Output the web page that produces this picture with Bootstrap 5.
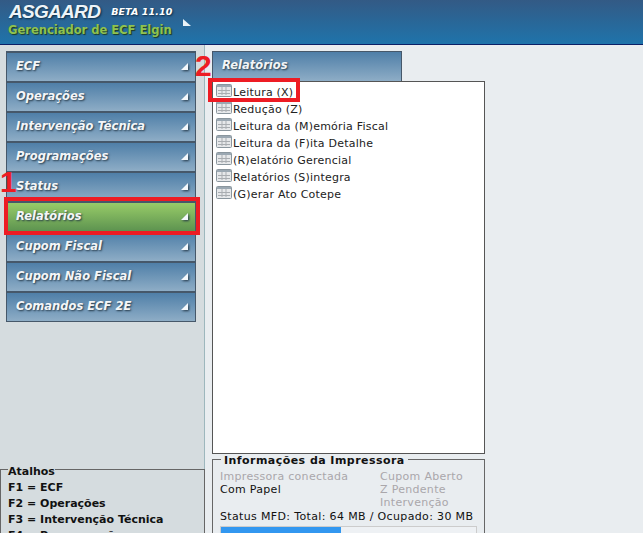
<!DOCTYPE html>
<html lang="pt"><head><meta charset="utf-8"><title>Asgaard</title>
<link href="https://cdn.jsdelivr.net/npm/bootstrap@5.3.0/dist/css/bootstrap.min.css" rel="stylesheet">
<style>
html,body{height:533px;overflow:hidden}
body{font-family:"DejaVu Sans",Verdana,sans-serif;font-size:11px;line-height:13px;background:#e9edf0;color:#111;position:relative}
.topbar{height:45px;background:linear-gradient(#335a85,#1f74ab);border-bottom:1px solid #0b1f66;padding:0 8px;position:relative}
.brand-a{font-family:"Liberation Sans",sans-serif;font-size:19px;line-height:23px;font-weight:700;font-style:italic;color:#eef4f8;text-shadow:1px 1px 2px #0b2c44;padding-left:1px}
.brand-a>span:first-child{letter-spacing:-.7px}
.brand-b{font-family:"DejaVu Sans",sans-serif;font-size:9.5px;font-weight:700;font-style:italic;color:#fff;margin-left:11px;letter-spacing:.1px}
.brand-c{font-size:11.5px;line-height:14px;font-weight:700;color:#8fc24f;text-shadow:1px 1px 1px #1c3a20}
.corner{position:absolute;left:183px;top:19px}
.shell{height:488px}
.leftcol{width:205px;background:#d5dcdf;border-right:1px solid #9db7bd;padding:6px 0 0 0}
.menu{margin:0 8px 0 6px;border:1px solid #46586a;border-top:0}
.menu-row{height:30px;padding:0 7px 2px 9px;background:linear-gradient(#4f7fa8,#8eadc6);border-top:2px solid #46586a;color:#f4f6f8;font-weight:700;font-style:italic;font-size:11.5px;text-shadow:1px 1px 2px #233746}
.menu-row.on{background:linear-gradient(#98cc68,#5d9350)}
.tri{width:0;height:0;border-style:solid;border-width:0 0 7px 7px;border-color:transparent transparent #f4f8fb transparent;filter:drop-shadow(1px 1px 1px #233746)}
.shortcuts{position:absolute;left:0;top:469px;width:205px;height:80px;border:1px solid #666;padding:0 7px;margin:0;background:#d5dcdf}
.shortcuts div{font-weight:700;line-height:16px;font-size:11px;color:#111}
.sc-legend{position:absolute;left:7px;top:-5px;line-height:13px!important;background:#d5dcdf}
.sc-list{padding-top:10px}
.rightcol{padding:6px 0 0 7px;min-width:0}
.tab-h{width:190px;height:30px;background:linear-gradient(#4f7fa8,#8eadc6);border:1px solid #46586a;border-bottom:0;color:#f2f5f7;font-weight:700;font-style:italic;font-size:11.5px;padding:0 0 2px 9px;text-shadow:1px 1px 2px #233746}
.listbox{width:273px;height:373px;background:#fff;border:1px solid #555;padding:2px 0 0 3px}
.entry{height:17px;gap:1px;font-size:11px;line-height:18px;letter-spacing:.22px;color:#222}
.info{position:relative;width:273px;height:90px;margin-top:5px;border:1px solid #666;padding:10px 7px 0 7px}
.info-legend{position:absolute;left:8px;top:-6px;background:#e9edf0;font-weight:700;padding:0 3px;line-height:13px;font-size:11px;letter-spacing:.45px}
.info-grid{line-height:13px;letter-spacing:.3px}
.info-left{width:160px}
.dim{color:#aaa7ab}
.status-line{margin-top:1px;line-height:13px;letter-spacing:.35px}
.bar-track{height:12px;border:1px solid #ccc;background:#eef1f4;margin-top:3px}
.bar-fill{height:100%;background:#3297f0}
.mark-box{position:absolute;border:4px solid #ed1c24;pointer-events:none}
.mark-num{position:absolute;color:#ed1c24;font-family:"Liberation Sans",sans-serif;font-weight:700;font-size:30px;line-height:30px}
</style></head><body>
<svg width="0" height="0" class="position-absolute"><defs><symbol id="sheet" viewBox="0 0 16 14"><rect x=".5" y=".5" width="15" height="12" rx="1" fill="#e6e8ea" stroke="#8a969e"/><rect x="1" y="1" width="14" height="2" fill="#9ba8b2"/><path d="M2 6.5H14M2 9.5H14M6 3V11M10 3V11" stroke="#a9adb1" fill="none"/></symbol></defs></svg>
<header class="topbar">
<div class="brand-a d-flex align-items-center"><span>ASGAARD</span><span class="brand-b">BETA 11.10</span></div>
<div class="brand-c">Gerenciador de ECF Elgin</div>
<svg class="corner" width="9" height="9" viewBox="0 0 9 9"><path d="M0 0L8 7L0 7Z" fill="#eaf2f7"/></svg>
</header>
<div class="shell d-flex">
<aside class="leftcol flex-shrink-0">
<div class="menu">
<div class="menu-row d-flex align-items-center justify-content-between"><span>ECF</span><i class="tri"></i></div>
<div class="menu-row d-flex align-items-center justify-content-between"><span>Operações</span><i class="tri"></i></div>
<div class="menu-row d-flex align-items-center justify-content-between"><span>Intervenção Técnica</span><i class="tri"></i></div>
<div class="menu-row d-flex align-items-center justify-content-between"><span>Programações</span><i class="tri"></i></div>
<div class="menu-row d-flex align-items-center justify-content-between"><span>Status</span><i class="tri"></i></div>
<div class="menu-row on d-flex align-items-center justify-content-between"><span>Relatórios</span><i class="tri"></i></div>
<div class="menu-row d-flex align-items-center justify-content-between"><span>Cupom Fiscal</span><i class="tri"></i></div>
<div class="menu-row d-flex align-items-center justify-content-between"><span>Cupom Não Fiscal</span><i class="tri"></i></div>
<div class="menu-row d-flex align-items-center justify-content-between"><span>Comandos ECF 2E</span><i class="tri"></i></div>
</div>
</aside>
<main class="rightcol flex-grow-1">
<div class="tab-h d-flex align-items-center">Relatórios</div>
<div class="listbox">
<div class="entry d-flex"><svg width="16" height="14"><use href="#sheet"/></svg><span>Leitura (X)</span></div>
<div class="entry d-flex"><svg width="16" height="14"><use href="#sheet"/></svg><span>Redução (Z)</span></div>
<div class="entry d-flex"><svg width="16" height="14"><use href="#sheet"/></svg><span>Leitura da (M)emória Fiscal</span></div>
<div class="entry d-flex"><svg width="16" height="14"><use href="#sheet"/></svg><span>Leitura da (F)ita Detalhe</span></div>
<div class="entry d-flex"><svg width="16" height="14"><use href="#sheet"/></svg><span>(R)elatório Gerencial</span></div>
<div class="entry d-flex"><svg width="16" height="14"><use href="#sheet"/></svg><span>Relatórios (S)integra</span></div>
<div class="entry d-flex"><svg width="16" height="14"><use href="#sheet"/></svg><span>(G)erar Ato Cotepe</span></div>
</div>
<section class="info">
<div class="info-legend">Informações da Impressora</div>
<div class="info-grid d-flex">
<div class="info-left"><div class="dim">Impressora conectada</div><div>Com Papel</div></div>
<div><div class="dim">Cupom Aberto</div><div class="dim">Z Pendente</div><div class="dim">Intervenção</div></div>
</div>
<div class="status-line">Status MFD: Total: 64 MB / Ocupado: 30 MB</div>
<div class="bar-track"><div class="bar-fill" style="width:47%"></div></div>
</section>
</main>
</div>
<section class="shortcuts">
<div class="sc-legend">Atalhos</div>
<div class="sc-list"><div>F1 = ECF</div><div>F2 = Operações</div><div>F3 = Intervenção Técnica</div><div>F4 = Programações</div></div>
</section>
<div class="mark-box" style="left:4px;top:197px;width:196px;height:38px"></div>
<div class="mark-box" style="left:208px;top:78px;width:92px;height:24px"></div>
<div class="mark-num" style="left:0;top:167px">1</div>
<div class="mark-num" style="left:195px;top:51px">2</div>
</body></html>
